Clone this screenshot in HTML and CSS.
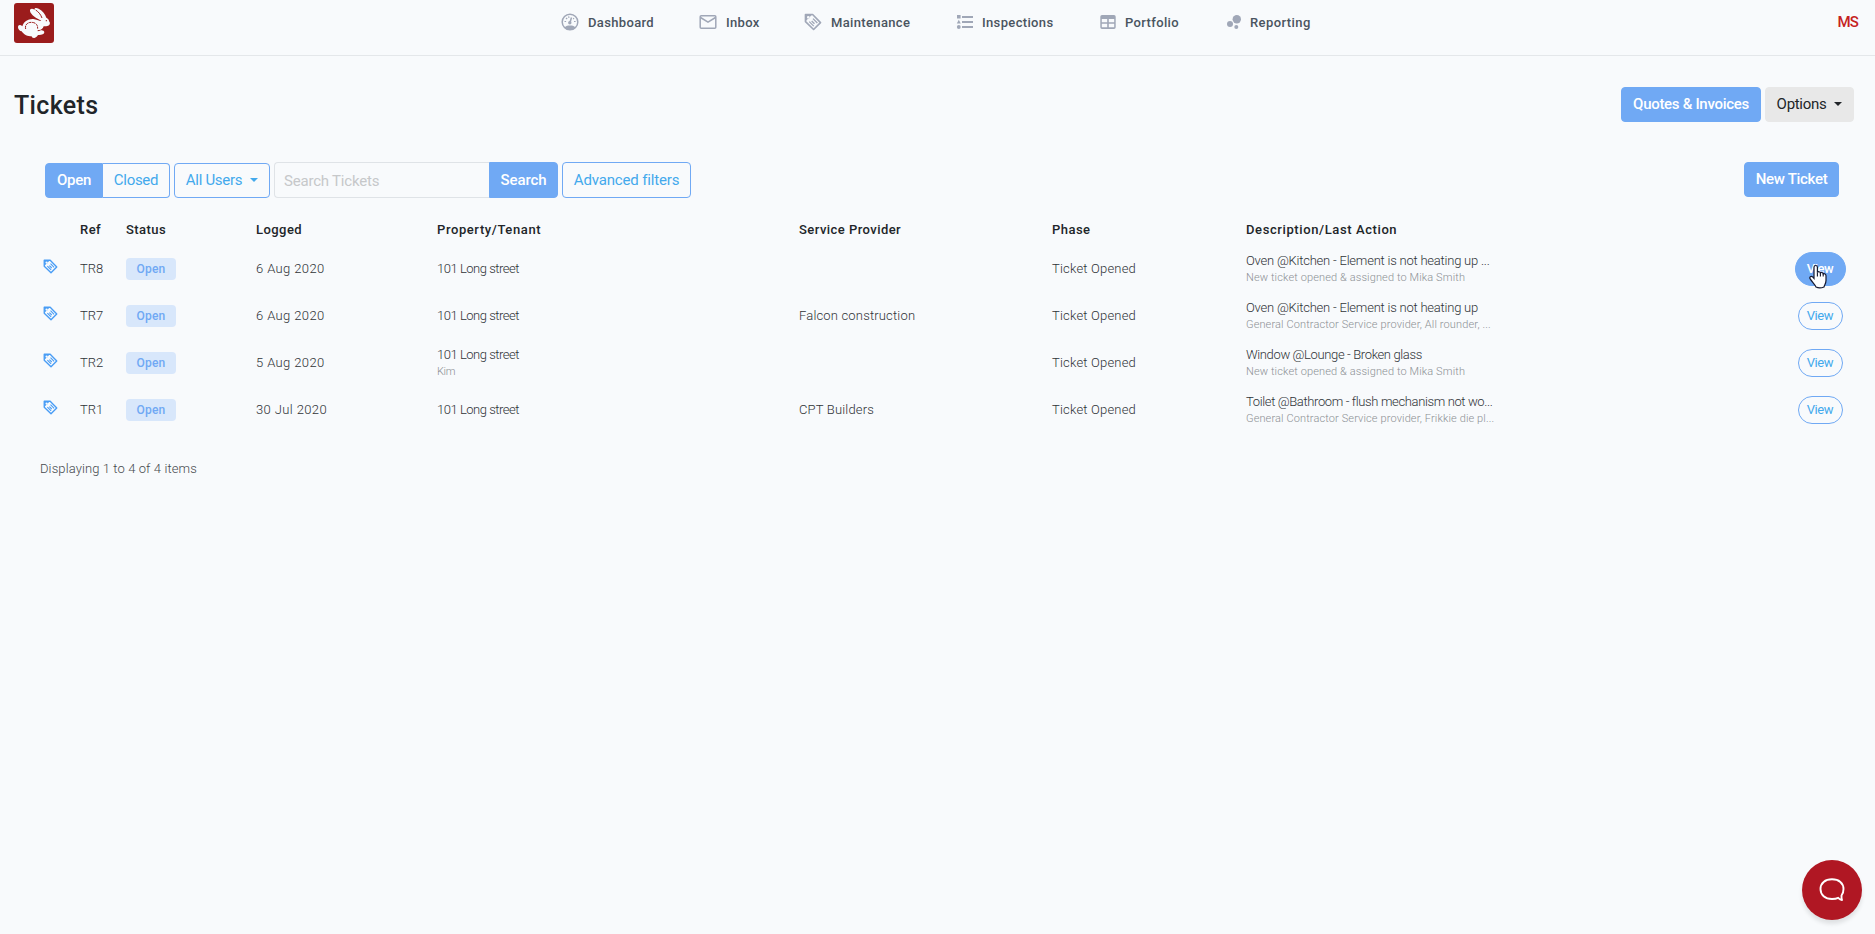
FILE: index.html
```
<!DOCTYPE html>
<html lang="en">
<head>
<meta charset="utf-8">
<title>Tickets</title>
<link rel="stylesheet" href="styles.css">
</head>
<body>
<svg class="sprite" aria-hidden="true">
  <symbol id="tag" viewBox="0 0 24 24">
    <path d="M2 2h9.5L22 12.8 12.8 22 2 11.5z" fill="none" stroke="currentColor" stroke-width="2.2" stroke-linejoin="round"/>
    <path d="M2 2h9L2 11zM5.7 3.9a1.8 1.8 0 1 0 0 3.6 1.8 1.8 0 0 0 0-3.6z" fill="currentColor" fill-rule="evenodd"/>
    <path d="M7 11.500l6 6M10.200 10.600l3.800 3.800M12 7.500l5.800 5.800" fill="none" stroke="currentColor" stroke-width="1.800"/>
  </symbol>
</svg>

<header class="topbar">
  <a class="logo" href="#">
    <svg viewBox="0 0 120 120">
      <rect width="120" height="120" rx="9" fill="#9b1c1c"/>
      <g fill="#f8fafc">
        <path d="M82 53C68 47 50 35 48 24c-1-8 7-8 14-4-2-6 5-6 12-3 12 6 20 17 23 27 5 2 8 6 9 12 3 3 2 8-1 11-5 4-12 3-16 3-2 5-4 9-7 12 5 0 9 2 9 6 0 6-10 9-19 8-3 4-5 7-9 8-4 3-10 0-10-4-12 0-23-4-30-15-5 0-11-6-11-12 0-8 7-9 13-3 4-14 17-23 33-22 9 1 15 5 21 6z"/>
      </g>
      <path d="M35 78c-3-12 5-20 17-20 13 0 20 8 19 19M71 83c6 0 11-2 15-6" fill="none" stroke="#9b1c1c" stroke-width="3" stroke-dasharray="9 2"/>
      <path d="M65 21c8 5 15 13 19 24" fill="none" stroke="#9b1c1c" stroke-width="3"/>
      <circle cx="97" cy="53" r="2" fill="#9b1c1c"/>
    </svg>
  </a>
  <nav class="nav">
    <a class="nav-item nav-dashboard" href="#">
      <svg class="nav-icon" viewBox="0 0 18 18" fill="none" stroke="currentColor" stroke-width="1.5"><circle cx="9" cy="9" r="7.8"/><path d="M3.4 14.4C5 12.6 7 12.4 9 12.4s4 .2 5.600 2L12 16.500H6z" fill="currentColor" stroke="none"/><circle cx="8.800" cy="9.800" r="1.700" fill="currentColor" stroke="none"/><path d="M9 9.500L10.500 4.500"/><path d="M3.500 8.500h1.600M13 8.500h1.600M5 5l1.200 1M7.600 3.400l.4 1.500M13 5.200l-.8.8" stroke-width="1.200"/></svg>
      <span>Dashboard</span></a>
    <a class="nav-item nav-inbox" href="#">
      <svg class="nav-icon" viewBox="0 0 18 18" fill="none" stroke="currentColor" stroke-width="1.500"><rect x="1.200" y="2.700" width="15.600" height="12.600" rx="1"/><path d="M1.500 4.500L9 9.200l7.500-4.700"/></svg>
      <span>Inbox</span></a>
    <a class="nav-item nav-maintenance" href="#">
      <svg class="nav-icon"><use href="#tag"/></svg>
      <span>Maintenance</span></a>
    <a class="nav-item nav-inspections" href="#">
      <svg class="nav-icon" viewBox="0 0 18 18" fill="currentColor"><path d="M6 3h11v2H6zM6 8h11v2H6zM6 13h11v2H6zM1 2h3.600v3.600H1zM2.800 6.800l2 3.600h-4z"/><circle cx="2.800" cy="14" r="1.900"/></svg>
      <span>Inspections</span></a>
    <a class="nav-item nav-portfolio" href="#">
      <svg class="nav-icon" viewBox="0 0 18 18"><path fill="currentColor" fill-rule="evenodd" d="M3 2h12a1.700 1.700 0 0 1 1.700 1.700v10.600A1.700 1.700 0 0 1 15 16H3a1.700 1.700 0 0 1-1.700-1.700V3.700A1.700 1.700 0 0 1 3 2zM2.800 6v3.200h5.400V6zM9.800 6v3.200h5.400V6zM2.800 10.700v3.600h5.400v-3.600zM9.800 10.700v3.600h5.400v-3.600z"/></svg>
      <span>Portfolio</span></a>
    <a class="nav-item nav-reporting" href="#">
      <svg class="nav-icon" viewBox="0 0 18 18" fill="currentColor"><circle cx="11.800" cy="6.300" r="4.200"/><circle cx="5" cy="11" r="3"/><circle cx="11.300" cy="14" r="2"/></svg>
      <span>Reporting</span></a>
  </nav>
  <a class="user" href="#">MS</a>
</header>

<main class="page">
  <div class="page-head">
    <h1 class="title">Tickets</h1>
    <div class="actions">
      <button class="btn btn-primary btn-quotes">Quotes &amp; Invoices</button>
      <button class="btn btn-light btn-options">Options<i class="caret"></i></button>
    </div>
  </div>

  <div class="toolbar">
    <div class="group">
      <button class="btn btn-primary group-first">Open</button>
      <button class="btn btn-outline group-last">Closed</button>
    </div>
    <button class="btn btn-outline btn-users">All Users<i class="caret"></i></button>
    <div class="search">
      <input class="search-input" type="text" placeholder="Search Tickets">
      <button class="btn btn-primary search-btn">Search</button>
    </div>
    <button class="btn btn-outline btn-filters">Advanced filters</button>
    <button class="btn btn-primary btn-new">New Ticket</button>
  </div>

  <section class="table">
    <div class="row row-head">
      <span></span><span>Ref</span><span>Status</span><span>Logged</span><span class="wide">Property/Tenant</span><span>Service Provider</span><span>Phase</span><span class="wide">Description/Last Action</span><span></span>
    </div>
    <div class="row">
      <svg class="row-icon"><use href="#tag"/></svg><span class="ref">TR8</span><span><b class="badge">Open</b></span><span class="date">6 Aug 2020</span>
      <span class="prop">101 Long street</span><span></span><span class="phase">Ticket Opened</span>
      <div><p class="desc">Oven @Kitchen - Element is not heating up ...</p><p class="note">New ticket opened &amp; assigned to Mika Smith</p></div>
      <div class="view-cell"><button class="view view-hover">View</button>
        <svg class="cursor" viewBox="0 0 18 24"><path d="M5 14V2.700a1.700 1.700 0 0 1 3.400 0V8c.6-1.200 2.700-1 3 .4 1-.8 2.600-.3 2.800 1 1.200-.6 2.800.2 2.800 1.800V16c0 3-1.500 4.300-2 6.500-2.500 1-6 1-8 0C6 20 3.500 18 1 14.200c-.8-1.600 1-3 2.400-2z" fill="#fff" stroke="#16182e" stroke-width="1.200"/><path d="M8.400 8v4M11.400 8.500V12M14.200 9.500V12" stroke="#16182e" stroke-width="1.100"/></svg>
      </div>
    </div>
    <div class="row">
      <svg class="row-icon"><use href="#tag"/></svg><span class="ref">TR7</span><span><b class="badge">Open</b></span><span class="date">6 Aug 2020</span>
      <span class="prop">101 Long street</span><span class="provider">Falcon construction</span><span class="phase">Ticket Opened</span>
      <div><p class="desc">Oven @Kitchen - Element is not heating up</p><p class="note">General Contractor Service provider, All rounder, ...</p></div>
      <div class="view-cell"><button class="view">View</button></div>
    </div>
    <div class="row">
      <svg class="row-icon"><use href="#tag"/></svg><span class="ref">TR2</span><span><b class="badge">Open</b></span><span class="date">5 Aug 2020</span>
      <div><p class="desc prop">101 Long street</p><p class="note tenant">Kim</p></div><span></span><span class="phase">Ticket Opened</span>
      <div><p class="desc desc-tight">Window @Lounge - Broken glass</p><p class="note">New ticket opened &amp; assigned to Mika Smith</p></div>
      <div class="view-cell"><button class="view">View</button></div>
    </div>
    <div class="row">
      <svg class="row-icon"><use href="#tag"/></svg><span class="ref">TR1</span><span><b class="badge">Open</b></span><span class="date">30 Jul 2020</span>
      <span class="prop">101 Long street</span><span class="provider">CPT Builders</span><span class="phase">Ticket Opened</span>
      <div><p class="desc desc-tight">Toilet @Bathroom - flush mechanism not wo...</p><p class="note">General Contractor Service provider, Frikkie die pl...</p></div>
      <div class="view-cell"><button class="view">View</button></div>
    </div>
  </section>
  <p class="summary">Displaying 1 to 4 of 4 items</p>
</main>

<button class="chat" aria-label="Chat">
  <svg viewBox="0 0 26 26" fill="none" stroke="#fff" stroke-width="1.900" stroke-linejoin="round"><path d="M22.500 18.500c1.500-1.800 2-3.800 2-6.500 0-6-4.500-9.700-11.500-9.700S1.500 6 1.500 12 6 22 13 22c2.500 0 4.500-.3 6.200-1.200.8.900 2 1.700 3.800 2.200-.5-1.500-.6-3-.5-4.500z"/></svg>
</button>
</body>
</html>
```
FILE: styles.css
```
* { box-sizing: border-box; }
body {
  margin: 0;
  height: 934px;
  overflow: hidden;
  background: #f8fafc;
  color: #212529;
  font: 400 15px/20px Roboto, "Open Sans", sans-serif;
}
a { color: inherit; text-decoration: none; }
p, h1 { margin: 0; }
.sprite { display: none; }

/* Top navigation */
.topbar {
  display: flex;
  align-items: flex-start;
  height: 56px;
  padding: 3px 17px 0 14px;
  border-bottom: 1px solid #e4e7ea;
}
.logo, .logo svg { display: block; width: 40px; height: 40px; }
.nav { display: flex; margin-left: 507px; padding-top: 9px; }
.nav-item {
  display: flex;
  align-items: center;
  gap: 9px;
  height: 20px;
  color: #4a5460;
  font-size: 13px;
  font-weight: 500;
  letter-spacing: .35px;
  white-space: nowrap;
}
.nav-item span { padding-top: 2px; }
.nav-icon { flex: none; width: 18px; height: 18px; color: #a0a7b7; }
.nav-dashboard { width: 138px; }
.nav-inbox { width: 105px; }
.nav-maintenance { width: 152px; }
.nav-inspections { width: 143px; gap: 8px; }
.nav-portfolio { width: 126px; gap: 8px; }
.nav-reporting { width: 90px; gap: 7px; letter-spacing: .42px; }
.user { margin: 9px 0 0 auto; color: #c5221f; font-weight: 500; letter-spacing: -.9px; }

/* Page heading */
.page { padding: 31px 21px 0 14px; }
.page-head { display: flex; justify-content: space-between; height: 35px; }
.title { padding-top: 1px; font-size: 25px; line-height: 35px; font-weight: 500; letter-spacing: .35px; }
.actions { display: flex; gap: 4px; }

/* Buttons */
.btn {
  display: flex;
  align-items: center;
  justify-content: center;
  height: 35px;
  padding: 0 0 1px;
  border: 1px solid #70a9f4;
  border-radius: 4px;
  color: #212529;
  font: inherit;
  letter-spacing: -.3px;
  white-space: nowrap;
}
.btn-primary { background: #70a9f4; color: #fff; font-weight: 500; }
.btn-outline { background: transparent; color: #43a9ec; }
.btn-light { background: #e8e8e8; border-color: #e8e8e8; }
.caret {
  margin-left: 8px;
  border: 4px solid transparent;
  border-top-color: currentColor;
  border-bottom: 0;
}
.btn-quotes { width: 140px; }
.btn-options { width: 89px; }

/* Filters */
.toolbar {
  display: flex;
  align-items: flex-end;
  gap: 4px;
  height: 36px;
  margin: 40px 15px 0 31px;
}
.group { display: flex; }
.group-first { width: 58px; border-radius: 4px 0 0 4px; }
.group-last { width: 67px; border-left: 0; border-radius: 0 4px 4px 0; }
.btn-users { width: 96px; }
.search { display: flex; height: 36px; }
.search-input {
  width: 215px;
  height: 36px;
  padding: 2px 0 0 9px;
  border: 1px solid #dfe3e7;
  border-right: 0;
  border-radius: 4px 0 0 4px;
  background: transparent;
  font: inherit;
  letter-spacing: -.2px;
}
.search-input::placeholder { color: #c6c8ca; opacity: 1; }
.search-btn { width: 69px; height: 36px; border-radius: 0 4px 4px 0; letter-spacing: -.1px; }
.btn-filters { width: 129px; height: 36px; letter-spacing: -.16px; }
.btn-new { width: 95px; margin-left: auto; align-self: flex-start; }

/* Ticket list */
.table { padding: 14px 0 0 28px; }
.row {
  display: grid;
  grid-template-columns: 38px 46px 130px 181px 362px 253px 194px 551px 46px;
  align-items: center;
  height: 47px;
  color: #2f3337;
  font-size: 13px;
  font-weight: 300;
  white-space: nowrap;
}
.row-head { height: 33px; padding-top: 2px; color: #212529; font-weight: 500; letter-spacing: .45px; }
.row-head .wide { letter-spacing: .6px; }
.row-icon { width: 15px; height: 15px; margin: 0 0 4px 1px; color: #4a9df5; }
.date { letter-spacing: .38px; }
.prop, .desc.prop { letter-spacing: -.48px; }
.provider { letter-spacing: .17px; }
.phase { letter-spacing: .19px; }
.badge {
  display: block;
  width: 50px;
  height: 22px;
  border-radius: 4px;
  background: #d8e7fb;
  color: #70a9f4;
  font-size: 12px;
  font-weight: 500;
  line-height: 22px;
  letter-spacing: .22px;
  text-align: center;
}
.desc { line-height: 17px; letter-spacing: -.22px; }
.desc-tight { letter-spacing: -.37px; }
.note { padding-top: 1px; color: #8c9094; font-size: 11px; line-height: 15px; letter-spacing: .12px; }
.tenant { letter-spacing: -.39px; }
.view-cell { position: relative; display: flex; justify-content: center; }
.view {
  flex: none;
  width: 45px;
  height: 28px;
  padding: 1px 0 0;
  border: 1px solid #70a9f4;
  border-radius: 14px;
  background: transparent;
  color: #43a9ec;
  font: 400 13px/20px Roboto, sans-serif;
  letter-spacing: -.4px;
}
.view-hover { width: 51px; height: 34px; border-radius: 17px; background: #70a9f4; color: #fff; font-weight: 500; }
.cursor { position: absolute; left: 12px; top: 12px; width: 18px; height: 25px; }
.summary { margin: 26px 0 0 26px; color: #45494d; font-size: 13px; font-weight: 300; letter-spacing: .1px; }

/* Chat launcher */
.chat {
  position: fixed;
  right: 13px;
  bottom: 14px;
  display: flex;
  align-items: center;
  justify-content: center;
  width: 60px;
  height: 60px;
  padding: 0;
  border: 0;
  border-radius: 50%;
  background: #b01723;
  box-shadow: 0 4px 4px rgba(0, 0, 0, .1);
}
.chat svg { width: 26px; height: 26px; }
```
